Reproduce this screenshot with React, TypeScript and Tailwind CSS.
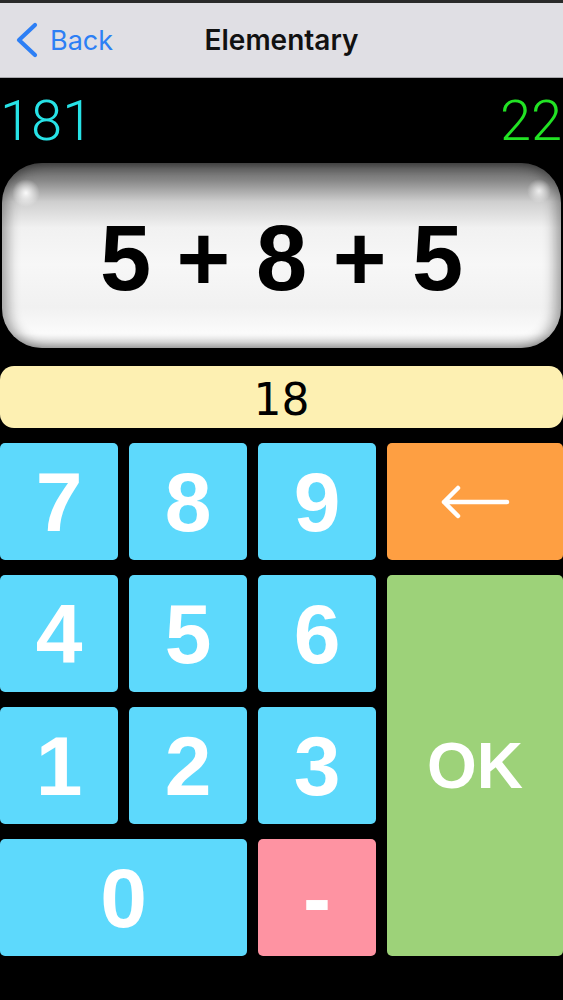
import React from "react";

function Key({
  children,
  className,
}: {
  children: React.ReactNode;
  className: string;
}) {
  return (
    <div
      className={`flex items-center justify-center rounded-[5px] text-white font-bold ${className}`}
    >
      {children}
    </div>
  );
}

export default function App() {
  const blue = "bg-[#5dd9fc]";
  return (
    <div className="w-[563px] h-[1000px] bg-black flex flex-col overflow-hidden font-['Liberation_Sans',Arial,sans-serif]">
      {/* Nav bar */}
      <div className="relative h-[78px] shrink-0 bg-[#e0dfe4] border-t-[3px] border-t-[#2a2a2a] border-b border-b-[#a9a9ad] flex items-center">
        <div className="flex items-center pl-[15px] gap-[11px] text-[#2d7ff5]">
          <svg width="24" height="36" viewBox="0 0 24 36" fill="none">
            <path
              d="M20 3 L4 18 L20 33"
              stroke="#2d7ff5"
              strokeWidth="4.2"
              strokeLinecap="round"
              strokeLinejoin="round"
            />
          </svg>
          <span className="font-['Inter',sans-serif] text-[27px] leading-none">Back</span>
        </div>
        <div className="absolute inset-0 flex items-center justify-center pointer-events-none">
          <span className="font-['Inter',sans-serif] font-semibold text-[28px] leading-none text-[#111]">
            Elementary
          </span>
        </div>
      </div>

      {/* Score row */}
      <div className="h-[85px] shrink-0 flex items-center justify-between font-['Roboto',sans-serif] font-light text-[56px] leading-none">
        <span className="text-[#27e2e6]">181</span>
        <span className="text-[#22e224] mr-[1px]">22</span>
      </div>

      {/* Question panel */}
      <div className="h-[185px] shrink-0 mx-[2px] rounded-[40px] relative overflow-hidden bg-[linear-gradient(to_bottom,#5a5a5a_0%,#858585_9%,#cfcfcf_21%,#f1f1f1_35%,#f7f7f7_55%,#f1f1f1_78%,#fbfbfb_92%,#d9d9d9_100%)] shadow-[inset_7px_0_12px_rgba(0,0,0,0.3),inset_-7px_0_12px_rgba(0,0,0,0.3)] flex items-center justify-center">
        <div className="absolute left-[10px] top-[16px] w-[28px] h-[28px] rounded-full bg-[radial-gradient(circle,rgba(255,255,255,0.95)_0%,rgba(255,255,255,0)_70%)]" />
        <div className="absolute right-[10px] top-[16px] w-[24px] h-[24px] rounded-full bg-[radial-gradient(circle,rgba(255,255,255,0.8)_0%,rgba(255,255,255,0)_70%)]" />
        <span className="relative font-bold text-[92px] leading-none text-black mt-[4px]">
          5 + 8 + 5
        </span>
      </div>

      {/* Answer bar */}
      <div className="h-[62px] shrink-0 mt-[18px] rounded-[14px] bg-[#fdf0b2] flex items-center justify-center">
        <span className="font-['DejaVu_Sans',sans-serif] text-[44px] leading-none text-black mt-[6px]">18</span>
      </div>

      {/* Keypad */}
      <div className="mt-[15px] grid grid-cols-[118px_118px_118px_1fr] grid-rows-[117px_117px_117px_117px] gap-x-[11px] gap-y-[15px]">
        <Key className={`${blue} text-[84px]`}>7</Key>
        <Key className={`${blue} text-[84px]`}>8</Key>
        <Key className={`${blue} text-[84px]`}>9</Key>
        <Key className="bg-[#fe9f42]">
          <svg width="70" height="34" viewBox="0 0 70 34" fill="none">
            <path
              d="M4 17 H67 M18 3 L4 17 L18 31"
              stroke="white"
              strokeWidth="4.5"
              strokeLinecap="round"
              strokeLinejoin="round"
            />
          </svg>
        </Key>

        <Key className={`${blue} text-[84px]`}>4</Key>
        <Key className={`${blue} text-[84px]`}>5</Key>
        <Key className={`${blue} text-[84px]`}>6</Key>
        <Key className="row-span-3 bg-[#9dd279] text-[64px]">OK</Key>

        <Key className={`${blue} text-[84px]`}>1</Key>
        <Key className={`${blue} text-[84px]`}>2</Key>
        <Key className={`${blue} text-[84px]`}>3</Key>

        <Key className={`${blue} col-span-2 text-[84px]`}>0</Key>
        <Key className="bg-[#fe93a2] text-[84px]">-</Key>
      </div>
    </div>
  );
}
